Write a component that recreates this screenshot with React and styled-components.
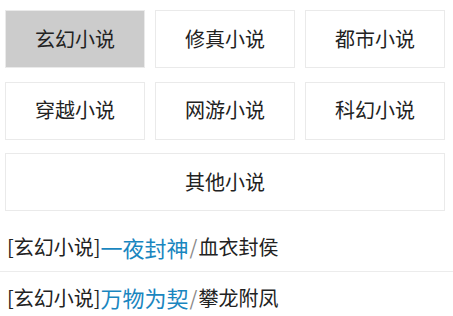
import React from 'react';
import styled, { createGlobalStyle } from 'styled-components';

const GlobalStyle = createGlobalStyle`
    body {
        margin: 0;
        background: #fff;
        font-family: "Noto Sans CJK SC", "Noto Sans", sans-serif;
        color: #222;
    }
`;

const Page = styled.div`
    width: 453px;
    overflow: hidden;
`;

const CategoryGrid = styled.div`
    display: grid;
    grid-template-columns: repeat(3, 140px);
    column-gap: 10px;
    row-gap: 13.5px;
    padding: 10px 0 0 5px;
`;

const CategoryButton = styled.div`
    height: 58px;
    box-sizing: border-box;
    border: 1px solid #eaeaea;
    padding-bottom: 2px;
    background: ${props => props.active ? '#cccccc' : '#fff'};
    display: flex;
    align-items: center;
    justify-content: center;
    font-size: 20px;
    color: #222;
    grid-column: ${props => props.wide ? 'span 3' : 'auto'};
`;

const BookList = styled.div`
    margin-top: 11px;
`;

const BookRow = styled.div`
    height: 50px;
    box-sizing: border-box;
    display: flex;
    align-items: center;
    padding-left: 7px;
    font-size: 20px;
    white-space: nowrap;
    border-bottom: ${props => props.last ? 'none' : '1px solid #ececec'};
`;

const Category = styled.span`
    color: #222;
`;

const Title = styled.span`
    color: #1a86bf;
    font-size: 22px;
`;

const Slash = styled.span`
    color: #888;
    margin: 0 1px;
`;

const Author = styled.span`
    color: #222;
`;

const categories = ['玄幻小说', '修真小说', '都市小说', '穿越小说', '网游小说', '科幻小说'];

const books = [
    { cat: '玄幻小说', title: '一夜封神', author: '血衣封侯' },
    { cat: '玄幻小说', title: '万物为契', author: '攀龙附凤' },
];

const App = () => {
    return (
        <Page>
            <GlobalStyle />
            <CategoryGrid>
                {categories.map((name, i) => (
                    <CategoryButton key={name} active={i === 0}>{name}</CategoryButton>
                ))}
                <CategoryButton wide>其他小说</CategoryButton>
            </CategoryGrid>
            <BookList>
                {books.map((b, i) => (
                    <BookRow key={b.title} last={i === books.length - 1}>
                        <Category>[{b.cat}]</Category>
                        <Title>{b.title}</Title>
                        <Slash>/</Slash>
                        <Author>{b.author}</Author>
                    </BookRow>
                ))}
            </BookList>
        </Page>
    );
};

export default App;
